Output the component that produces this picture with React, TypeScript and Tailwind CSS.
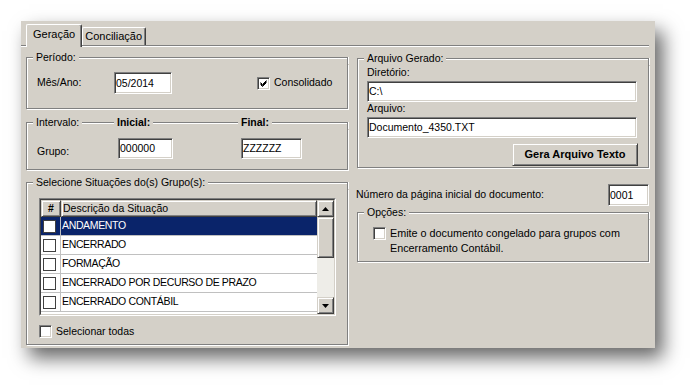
import React from "react";

const raised =
  "bg-[#d4d0c8] border border-t-[#d4d0c8] border-l-[#d4d0c8] border-r-[#404040] border-b-[#404040] shadow-[inset_1px_1px_0_#fff,inset_-1px_-1px_0_#808080]";

const Field = ({ value, className }: { value: string; className: string }) => (
  <div
    className={`bg-white border border-t-[#808080] border-l-[#808080] border-r-white border-b-white shadow-[inset_1px_1px_0_#404040,inset_-1px_-1px_0_#d4d0c8] pl-[1px] flex items-center leading-[13px] ${className}`}
  >
    {value}
  </div>
);

const CheckBox = ({ checked }: { checked?: boolean }) => (
  <span className="w-[13px] h-[13px] shrink-0 bg-white border border-t-[#808080] border-l-[#808080] border-r-white border-b-white shadow-[inset_1px_1px_0_#404040,inset_-1px_-1px_0_#d4d0c8] flex items-center justify-center">
    {checked && (
      <svg width="7" height="7" viewBox="0 0 7 7">
        <path d="M0.5 2.5 L2.5 4.5 L6.5 0.5 M0.5 3.5 L2.5 5.5 L6.5 1.5 M0.5 4.5 L2.5 6.5 L6.5 2.5" stroke="#000" strokeWidth="1" fill="none" />
      </svg>
    )}
  </span>
);

const Line = ({ last }: { last?: boolean }) => (
  <div
    className={
      last
        ? "flex-1 mt-[6px] border-t border-r border-[#808080] shadow-[inset_0_1px_0_#fff,1px_0_0_#fff]"
        : "flex-1 mt-[6px] border-t border-[#808080] shadow-[inset_0_1px_0_#fff]"
    }
  />
);

const GroupBox = ({
  title,
  header,
  className,
  bodyClass,
  children,
}: {
  title?: string;
  header?: React.ReactNode;
  className?: string;
  bodyClass?: string;
  children: React.ReactNode;
}) => (
  <div className={`flex flex-col ${className ?? ""}`}>
    <div className="flex h-[13px]">
      <div className="w-[7px] mt-[6px] border-t border-l border-[#808080] shadow-[inset_1px_1px_0_#fff]" />
      {header ?? (
        <>
          <span className="px-[3px] leading-[13px]">{title}</span>
          <Line last />
        </>
      )}
    </div>
    <div className={`border-x border-b border-[#808080] shadow-[inset_1px_0_0_#fff,1px_1px_0_#fff] ${bodyClass ?? ""}`}>
      {children}
    </div>
  </div>
);

const rows = ["ANDAMENTO", "ENCERRADO", "FORMAÇÃO", "ENCERRADO POR DECURSO DE PRAZO", "ENCERRADO CONTÁBIL"];

const Arrow = ({ down }: { down?: boolean }) => (
  <svg width="7" height="4" viewBox="0 0 7 4">
    <path d={down ? "M0 0 H7 L3.5 4 Z" : "M0 4 H7 L3.5 0 Z"} fill="#000" />
  </svg>
);

const Grid = () => (
  <div className="w-[297px] h-[118px] border border-t-[#808080] border-l-[#808080] border-r-white border-b-white">
    <div className="h-full border border-t-[#404040] border-l-[#404040] border-r-[#d4d0c8] border-b-[#d4d0c8] bg-white flex">
      <div className="flex-1 flex flex-col">
        <div className="flex h-[17px]">
          <div className={`w-[20px] flex items-center justify-center font-bold ${raised}`}>#</div>
          <div className={`flex-1 flex items-center pl-[1px] ${raised}`}>Descrição da Situação</div>
        </div>
        {rows.map((r, i) => (
          <div
            key={r}
            className={`flex h-[19px] border-b border-[#c0c0c0] ${i === 0 ? "bg-[#0a246a] text-white" : ""}`}
          >
            <div className="w-[20px] border-r border-[#c0c0c0] flex items-center pl-[2px]">
              <span className="w-[13px] h-[13px] bg-white border border-[#404040]" />
            </div>
            <div className="flex-1 flex items-center pl-[1px] tracking-[-0.35px]">{r}</div>
          </div>
        ))}
      </div>
      <div className="w-[17px] flex flex-col bg-[#eeede8]">
        <div className={`h-[17px] flex items-center justify-center ${raised}`}>
          <Arrow />
        </div>
        <div className={`h-[41px] ${raised}`} />
        <div className="flex-1" />
        <div className={`h-[17px] flex items-center justify-center ${raised}`}>
          <Arrow down />
        </div>
      </div>
    </div>
  </div>
);

const App = () => {
  return (
    <div className="w-[697px] h-[392px] bg-white pl-[21px] pt-[21px] font-['Liberation_Sans',Arial,sans-serif] text-[10.5px] text-black">
      <div className="w-[634px] h-[327px] bg-[#d4d0c8] flex flex-col shadow-[8px_10px_18px_rgba(0,0,0,0.6)]">
        {/* abas */}
        <div className="flex items-end h-[24px] pl-[5px]">
          <div className="relative z-10 h-[23px] -mb-[2px] bg-[#d4d0c8] rounded-t-[2px] border-t border-l border-white border-r border-r-[#404040] shadow-[inset_-1px_0_0_#808080] px-[6px] pt-[3px] leading-[13px] text-[11px]">
            Geração
          </div>
          <div className="h-[18px] bg-[#d4d0c8] rounded-t-[2px] border-t border-l border-white border-r border-r-[#404040] shadow-[inset_-1px_0_0_#808080] px-[2px] pr-[3px] pt-[2px] leading-[13px] text-[11px]">
            Conciliação
          </div>
        </div>

        <div className="flex-1 mr-[6px] border-t border-[#808080] shadow-[inset_0_1px_0_#fff] flex gap-[9px] pl-[5px]">
          {/* coluna esquerda */}
          <div className="w-[322px] flex flex-col pt-[5px]">
            <GroupBox title="Período:" bodyClass="flex items-center pl-[10px] pt-[8px] pb-[14px]">
              <span className="w-[77px]">Mês/Ano:</span>
              <Field value="05/2014" className="w-[58px] h-[22px]" />
              <span className="ml-[85px] flex items-center gap-[4px]">
                <CheckBox checked />
                Consolidado
              </span>
            </GroupBox>

            <GroupBox
              className="mt-[7px]"
              bodyClass="flex items-end pl-[10px] pt-[9px] pb-[10px]"
              header={
                <>
                  <div className="w-[81px] flex">
                    <span className="px-[3px] leading-[13px]">Intervalo:</span>
                    <Line />
                  </div>
                  <div className="w-[124px] flex">
                    <span className="px-[3px] leading-[13px] font-bold">Inicial:</span>
                    <Line />
                  </div>
                  <div className="flex-1 flex">
                    <span className="px-[3px] leading-[13px] font-bold">Final:</span>
                    <Line last />
                  </div>
                </>
              }
            >
              <span className="w-[81px] leading-[13px] mb-px">Grupo:</span>
              <Field value="000000" className="w-[55px] h-[21px]" />
              <Field value="ZZZZZZ" className="ml-[68px] w-[61px] h-[21px]" />
            </GroupBox>

            <GroupBox title="Selecione Situações do(s) Grupo(s):" className="mt-[6px]" bodyClass="pl-[12px] pt-[9px] pb-[6px]">
              <Grid />
              <div className="mt-[9px] flex items-center gap-[4px] leading-[13px]">
                <CheckBox />
                Selecionar todas
              </div>
            </GroupBox>
          </div>

          {/* coluna direita */}
          <div className="w-[292px] flex flex-col pt-[6px]">
            <GroupBox title="Arquivo Gerado:" bodyClass="flex flex-col pl-[9px] pr-[10px] pt-[1px] pb-[1px] leading-[13px]">
              <span>Diretório:</span>
              <Field value="C:\" className="mt-[2px] w-[270px] h-[21px]" />
              <span>Arquivo:</span>
              <Field value="Documento_4350.TXT" className="mt-[2px] w-[270px] h-[21px]" />
              <button className={`mt-[5px] self-end w-[126px] h-[23px] font-bold text-[11px] ${raised}`}>Gera Arquivo Texto</button>
            </GroupBox>

            <div className="mt-[16px] flex items-center justify-between">
              <span className="-ml-px">Número da página inicial do documento:</span>
              <Field value="0001" className="w-[41px] h-[22px]" />
            </div>

            <GroupBox title="Opções:" bodyClass="flex items-start pl-[15px] pt-[7px] pb-[5px]">
              <span className="mt-px">
                <CheckBox />
              </span>
              <span className="ml-[4px] leading-[15px] text-[10.8px]">
                Emite o documento congelado para grupos com
                <br />
                Encerramento Contábil.
              </span>
            </GroupBox>
          </div>
        </div>
      </div>
    </div>
  );
};

export default App;
